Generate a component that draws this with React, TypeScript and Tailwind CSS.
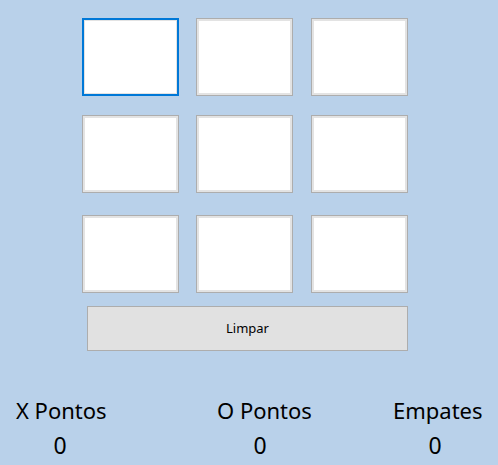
import { useState } from "react";

const cellBase = "block h-[78px] w-[97px] bg-white outline-none";

function Cell({ focused, value, onClick }: { focused?: boolean; value: string; onClick: () => void }) {
  return (
    <button
      className={
        focused
          ? `${cellBase} border-2 border-[#0078d7] shadow-[inset_0_0_0_1px_#e3e3e3]`
          : `${cellBase} border border-[#adadad] shadow-[inset_0_0_0_2px_#e3e3e3]`
      }
      onClick={onClick}
    >
      <span className="text-3xl text-black">{value}</span>
    </button>
  );
}

function Score({ label, value, className, zeroClass }: { label: string; value: number; className: string; zeroClass: string }) {
  return (
    <div className={className}>
      <div className="text-[22px] leading-[35px] text-black">{label}</div>
      <div className={`w-[40px] text-center text-[23px] leading-[35px] text-black ${zeroClass}`}>{value}</div>
    </div>
  );
}

export default function App() {
  const [cells, setCells] = useState<string[]>(Array(9).fill(""));
  const [turn, setTurn] = useState("X");

  function play(i: number) {
    if (cells[i]) return;
    const next = [...cells];
    next[i] = turn;
    setCells(next);
    setTurn(turn === "X" ? "O" : "X");
  }

  const rowMargins = ["mt-[18px]", "mt-[19px]", "mt-[22px]"];

  return (
    <div
      className="h-[465px] w-[498px] overflow-hidden bg-[#b9d1ea]"
      style={{ fontFamily: '"Noto Sans", "Open Sans", sans-serif' }}
    >
      <div className="ml-[82px]">
        {[0, 1, 2].map((r) => (
          <div key={r} className={`flex ${rowMargins[r]}`}>
            {[0, 1, 2].map((c) => {
              const i = r * 3 + c;
              return (
                <div key={c} className={c === 0 ? "flex" : c === 1 ? "ml-[17px] flex" : "ml-[18px] flex"}>
                  <Cell focused={i === 0} value={cells[i]} onClick={() => play(i)} />
                </div>
              );
            })}
          </div>
        ))}
      </div>

      <button
        className="ml-[87px] mt-[13px] block h-[45px] w-[321px] border border-[#adadad] bg-[#e1e1e1] text-[13px] text-black"
        onClick={() => {
          setCells(Array(9).fill(""));
          setTurn("X");
        }}
      >
        Limpar
      </button>

      <div className="mt-[42px] flex">
        <Score label="X Pontos" value={0} className="ml-[16px] w-[201px]" zeroClass="ml-[24px]" />
        <Score label="O Pontos" value={0} className="w-[176px]" zeroClass="ml-[23px]" />
        <Score label="Empates" value={0} className="flex-1" zeroClass="ml-[22px]" />
      </div>
    </div>
  );
}
